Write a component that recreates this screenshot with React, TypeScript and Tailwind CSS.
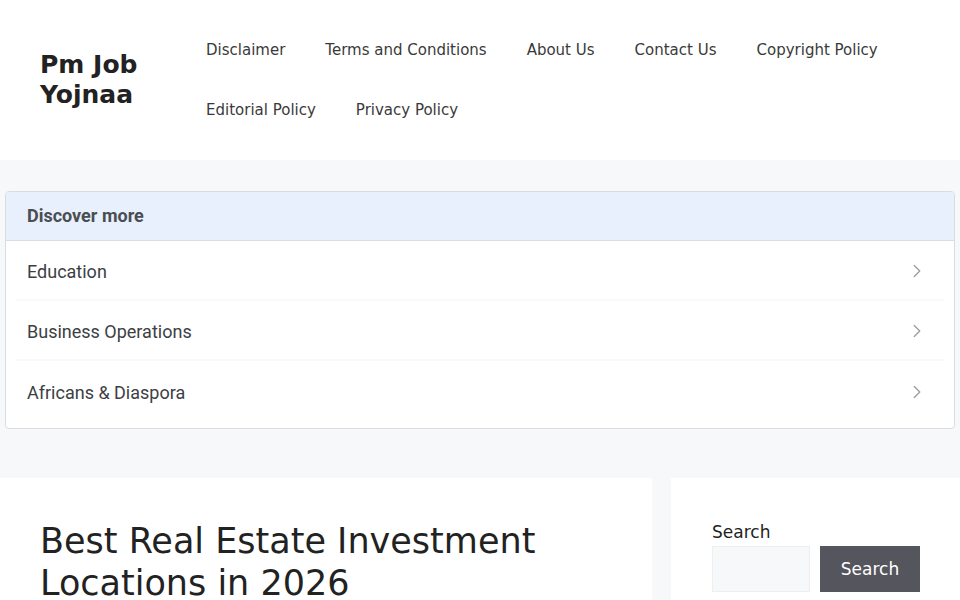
import { ChevronRight } from "lucide-react";

const navItems = [
  "Disclaimer",
  "Terms and Conditions",
  "About Us",
  "Contact Us",
  "Copyright Policy",
  "Editorial Policy",
  "Privacy Policy",
];

const topics = ["Education", "Business Operations", "Africans & Diaspora"];

const App = () => {
  return (
    <div className="min-h-screen bg-[#f7f8f9] font-['DejaVu_Sans',sans-serif] text-[#222222]">
      {/* Header */}
      <header className="bg-white px-10 py-5">
        <div className="flex items-center">
          <div className="w-[146px] shrink-0 text-[25px] font-bold leading-[30px] text-[#222222]">
            Pm Job
            <br />
            Yojnaa
          </div>
          <nav className="flex-1">
            <ul className="flex flex-wrap">
              {navItems.map((item) => (
                <li key={item}>
                  <a className="block px-5 text-[15px] leading-[60px] text-[#3a3a3a]">{item}</a>
                </li>
              ))}
            </ul>
          </nav>
        </div>
      </header>

      {/* Discover more */}
      <div className="px-[5px] pt-[31px]">
        <div className="overflow-hidden rounded-[4px] border border-[#dadce0] bg-white pb-[7px] font-['Roboto',sans-serif] text-[#3c4043]">
          <div className="flex h-[49px] items-center border-b border-[#dadce0] bg-[#e8f0fe] px-[21px] pb-[2px] text-[18px] font-bold text-[#4a4d52]">
            Discover more
          </div>
          {topics.map((topic, i) => (
            <div key={topic} className="px-[10px]">
              <div
                className={
                  i < topics.length - 1
                    ? "flex h-[60px] items-center justify-between border-b-2 border-[#f8f9fa] pl-[11px] pr-[16px] pt-[2px]"
                    : "flex h-[60px] items-center justify-between pl-[11px] pr-[16px] pt-[2px]"
                }
              >
                <span className="text-[18px]">{topic}</span>
                <ChevronRight className="h-[22px] w-[22px] text-[#9aa0a6]" strokeWidth={1.5} />
              </div>
            </div>
          ))}
        </div>
      </div>

      {/* Content */}
      <div className="mt-[49px] flex gap-[19px]">
        <main className="w-[652px] shrink-0 bg-white px-10 pt-[42px] pb-10">
          <h1 className="text-[35px] font-normal leading-[42px] text-[#222222]">
            Best Real Estate Investment Locations in 2026
          </h1>
        </main>
        <aside className="flex-1 bg-white pl-[41px] pr-10 pt-10">
          <label className="block text-[17px] leading-[28px] text-[#222222]">Search</label>
          <div className="flex gap-[10px]">
            <input className="h-[46px] w-[98px] border border-[#eeeeee] bg-[#f7f8f9]" />
            <button className="h-[46px] w-[100px] bg-[#55555e] pt-[2px] text-[17px] text-white">Search</button>
          </div>
        </aside>
      </div>
    </div>
  );
};

export default App;
